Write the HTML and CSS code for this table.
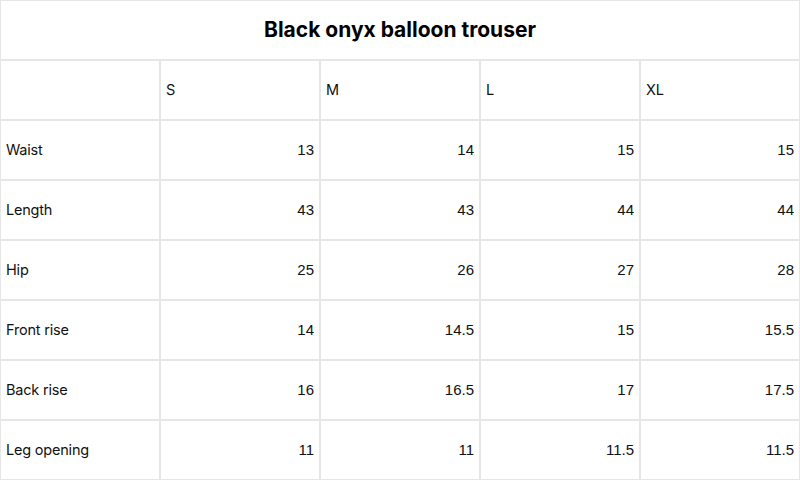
FILE: index.html
```html
<!DOCTYPE html>
<html>
<head>
<meta charset="utf-8">
<link rel="stylesheet" href="styles.css">
</head>
<body>
<table class="size-table">
  <colgroup>
    <col class="col"><col class="col"><col class="col"><col class="col"><col class="col">
  </colgroup>
  <tr class="title-row"><td colspan="5" class="title">Black onyx balloon trouser</td></tr>
  <tr class="head-row"><td></td><td class="label">S</td><td class="label">M</td><td class="label">L</td><td class="label">XL</td></tr>
  <tr><td class="label">Waist</td><td class="num">13</td><td class="num">14</td><td class="num">15</td><td class="num">15</td></tr>
  <tr><td class="label">Length</td><td class="num">43</td><td class="num">43</td><td class="num">44</td><td class="num">44</td></tr>
  <tr><td class="label">Hip</td><td class="num">25</td><td class="num">26</td><td class="num">27</td><td class="num">28</td></tr>
  <tr><td class="label">Front rise</td><td class="num">14</td><td class="num">14.5</td><td class="num">15</td><td class="num">15.5</td></tr>
  <tr><td class="label">Back rise</td><td class="num">16</td><td class="num">16.5</td><td class="num">17</td><td class="num">17.5</td></tr>
  <tr><td class="label">Leg opening</td><td class="num">11</td><td class="num">11</td><td class="num">11.5</td><td class="num">11.5</td></tr>
</table>
</body>
</html>
```
FILE: styles.css
```css
html, body {
  margin: 0;
  padding: 0;
  background: #ffffff;
}
.size-table {
  width: 801px;
  margin: -1px 0 0 -1px;
  border-collapse: collapse;
  table-layout: fixed;
  color: #111111;
}
.col {
  width: 160px;
}
.size-table td {
  height: 56px;
  border: 2px solid #e6e6e6;
  padding: 0 5px 2px 5px;
  font-size: 15px;
  vertical-align: middle;
}
.size-table td.title {
  text-align: center;
  font-family: "Inter", "Liberation Sans", sans-serif;
  font-weight: 700;
  font-size: 21px;
  color: #000000;
}
.size-table td.label {
  text-align: left;
  font-family: "Inter", "Liberation Sans", sans-serif;
  font-size: 14.5px;
  letter-spacing: -0.2px;
}
.size-table td.num {
  text-align: right;
  font-family: "Liberation Sans", "Arial", sans-serif;
  font-size: 15px;
}
```
